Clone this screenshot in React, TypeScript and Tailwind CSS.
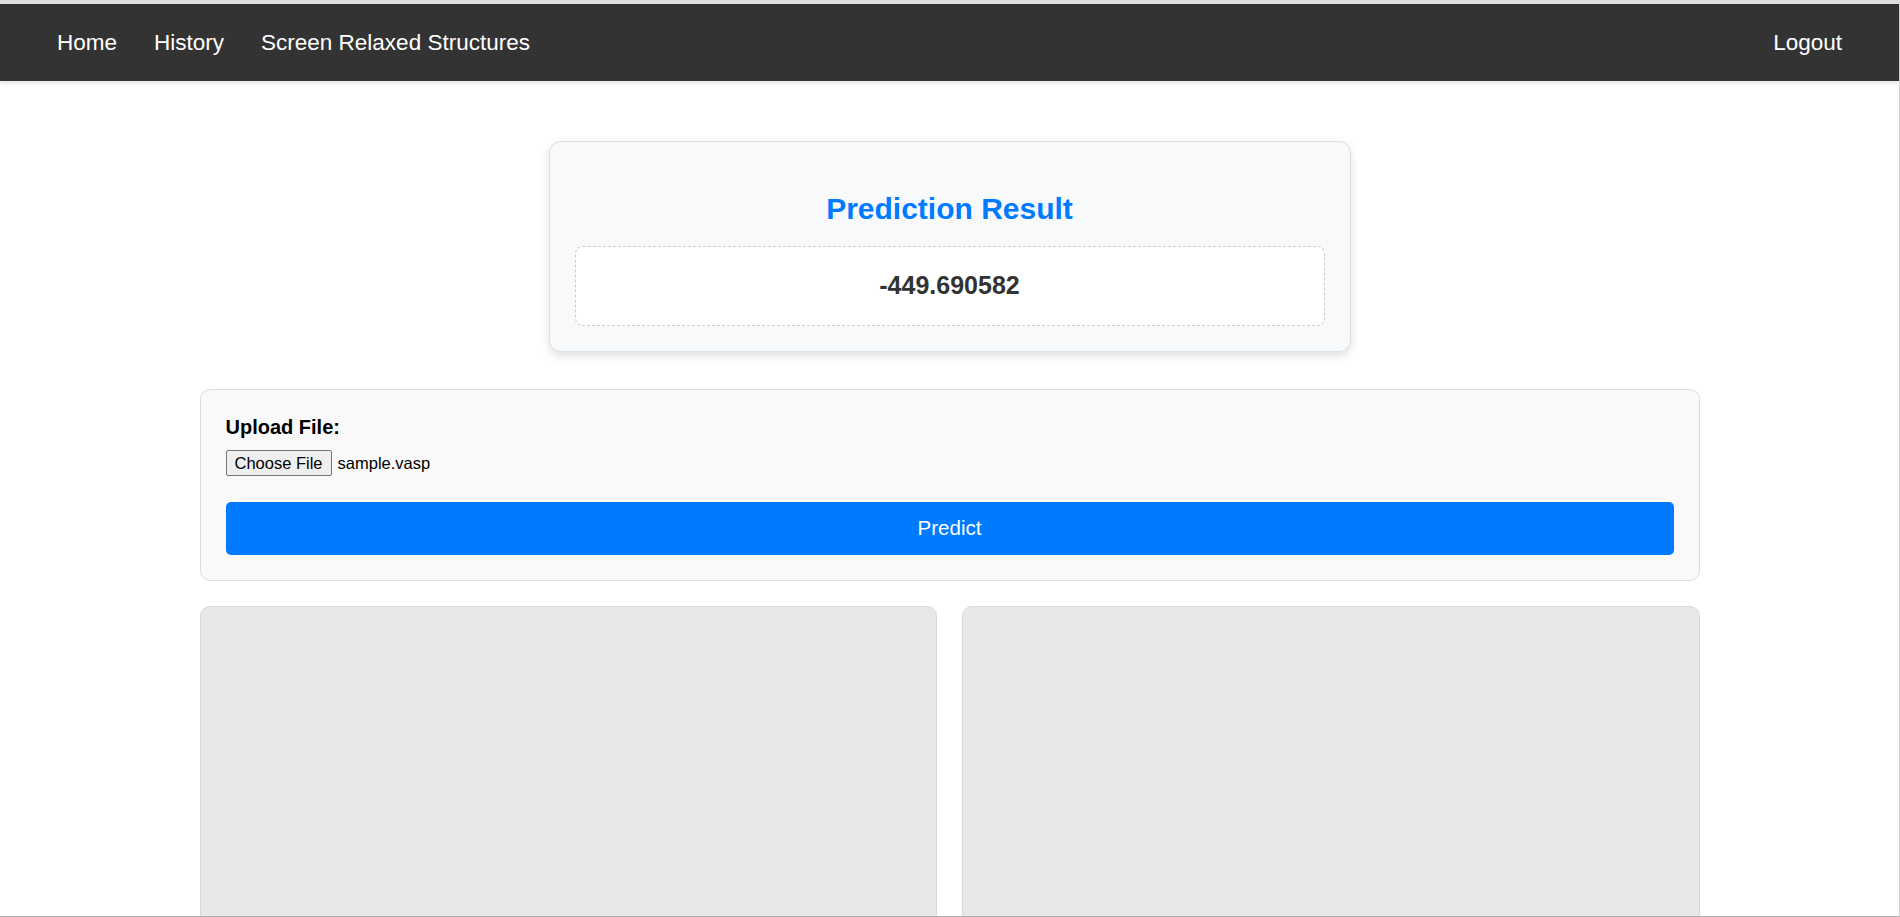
import React from 'react'

// simple prediction page: navbar, result card, upload form, two empty viewer panels

const navLinks = ['Home', 'History', 'Screen Relaxed Structures']

function Navbar() {
  return (
    <nav className="flex h-[77px] items-center justify-between bg-[#333333] px-[57px] shadow-[0_2px_5px_rgba(0,0,0,0.12)] relative z-10">
      <div className="flex items-center gap-[37px]">
        {navLinks.map(link => (
          <a key={link} href="#" className="text-[22.5px] leading-[26px] text-white">
            {link}
          </a>
        ))}
      </div>
      <a href="#" className="text-[22.5px] leading-[26px] text-white">Logout</a>
    </nav>
  )
}

function ResultCard({ value }: { value: string }) {
  return (
    <div className="mx-auto mt-[60px] w-[802px] rounded-[12px] border border-[#dcdfe3] bg-[#f8f9fa] px-[25px] pb-[25px] pt-[25px] shadow-[0_4px_10px_rgba(0,0,0,0.12)]">
      <h2 className="mt-[25px] mb-[20px] text-center text-[30px] font-bold leading-[34px] text-[#007bff]">
        Prediction Result
      </h2>
      <div className="rounded-[8px] border border-dashed border-[#cccccc] bg-white pt-[25px] pb-[26px] text-center">
        <p className="text-[25px] font-bold leading-[27px] text-[#333333]">{value}</p>
      </div>
    </div>
  )
}

function UploadForm() {
  return (
    <div className="mt-[37px] rounded-[10px] border border-[#dddddd] bg-[#f9f9f9] px-[25px] pt-[26px] pb-[25px]">
      <label className="mb-[12px] block text-[20px] font-bold leading-[22px] text-black">Upload File:</label>
      <div className="flex h-[26px] items-center">
        <span className="rounded-[2px] border border-[#767676] bg-[#efefef] px-[8px] py-[3px] text-[16.5px] leading-[18px] text-black">
          Choose File
        </span>
        <span className="ml-[6px] text-[16.5px] leading-[18px] text-black">sample.vasp</span>
      </div>
      <button type="button" className="mt-[26px] h-[53px] w-full rounded-[5px] bg-[#007bff] text-[20.5px] text-white">
        Predict
      </button>
    </div>
  )
}

export default function App() {
  return (
    <div
      className="h-[917px] overflow-hidden border-t-4 border-r border-b border-t-[#dedede] border-r-[#cfcfcf] border-b-[#b0b0b0] bg-white"
      style={{ fontFamily: '"Liberation Sans", Arial, sans-serif' }}
    >
      <Navbar />
      <ResultCard value="-449.690582" />
      <div className="mx-auto w-[1500px]">
        <UploadForm />
        <div className="mt-[25px] grid grid-cols-2 gap-[25px]">
          <div className="h-[400px] rounded-[10px] border border-[#d9d9d9] bg-[#e8e8e8]" />
          <div className="h-[400px] rounded-[10px] border border-[#d9d9d9] bg-[#e8e8e8]" />
        </div>
      </div>
    </div>
  )
}
